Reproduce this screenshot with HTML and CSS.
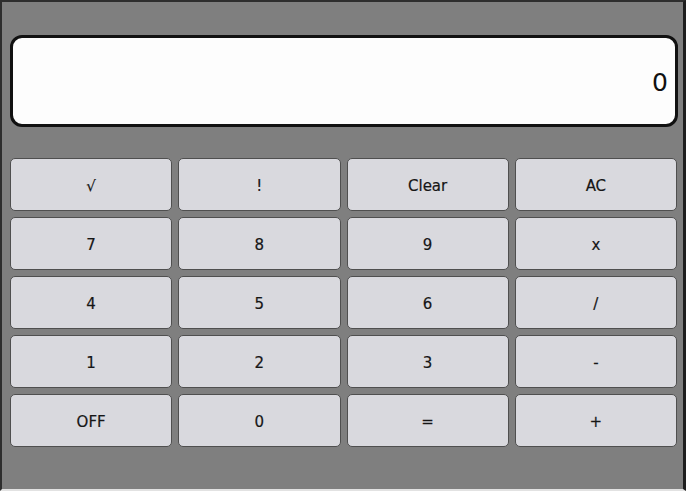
FILE: index.html
```html
<!DOCTYPE html>
<html>
<head>
<meta charset="utf-8">
<link rel="stylesheet" href="styles.css">
</head>
<body>
<div class="frame">
  <div class="display"><span class="value">0</span></div>
  <div class="keypad">
    <div class="key">√</div>
    <div class="key">!</div>
    <div class="key">Clear</div>
    <div class="key">AC</div>
    <div class="key">7</div>
    <div class="key">8</div>
    <div class="key">9</div>
    <div class="key">x</div>
    <div class="key">4</div>
    <div class="key">5</div>
    <div class="key">6</div>
    <div class="key">/</div>
    <div class="key">1</div>
    <div class="key">2</div>
    <div class="key">3</div>
    <div class="key">-</div>
    <div class="key">OFF</div>
    <div class="key">0</div>
    <div class="key">=</div>
    <div class="key">+</div>
  </div>
</div>
</body>
</html>
```

FILE: styles.css
```css
html, body {
  margin: 0;
  padding: 0;
  background: #808080;
}
.frame {
  box-sizing: border-box;
  width: 686px;
  height: 491px;
  background: #7f7f7f;
  border-left: 2px solid #2e2e2e;
  border-top: 2px solid #2e2e2e;
  border-right: 3px solid #1e1e1e;
  border-bottom: 2px solid #e2e2e2;
  padding: 33px 5px 0 8px;
  font-family: "DejaVu Sans", sans-serif;
  color: #111;
}
.display {
  box-sizing: border-box;
  height: 92px;
  background: #fdfdfd;
  border: 3px solid #111;
  border-radius: 12px;
  display: flex;
  align-items: center;
  justify-content: flex-end;
  padding-right: 7px;
  padding-top: 3px;
}
.value {
  font-size: 25px;
  color: #111;
}
.keypad {
  margin-top: 31px;
  margin-right: 1px;
  display: grid;
  grid-template-columns: repeat(4, 1fr);
  grid-auto-rows: 53px;
  column-gap: 6px;
  row-gap: 6px;
}
.key {
  box-sizing: border-box;
  background: #d9d9de;
  border: 1px solid #4f4f4f;
  border-radius: 5px;
  display: flex;
  align-items: center;
  justify-content: center;
  padding-top: 2px;
  font-size: 15px;
  color: #161616;
  -webkit-text-stroke: 0.2px #161616;
}
```
